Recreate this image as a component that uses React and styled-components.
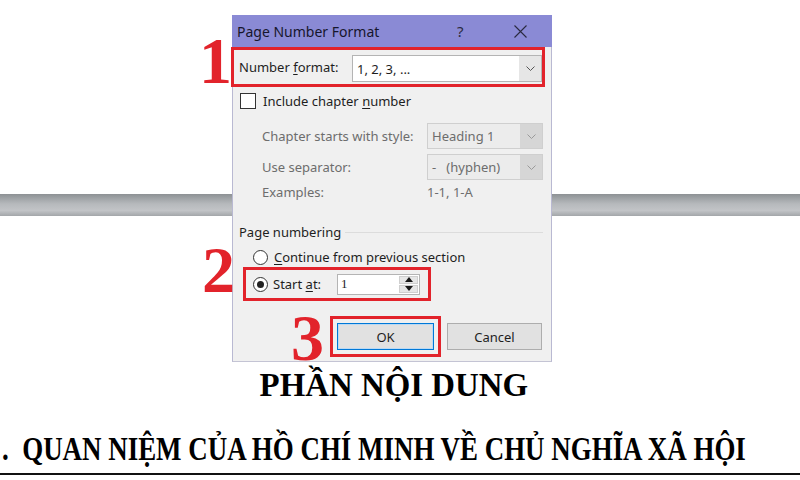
import React from "react";
import styled, { createGlobalStyle } from "styled-components";

const Global = createGlobalStyle`
  html, body { margin: 0; padding: 0; background: #fff; }
  * { box-sizing: border-box; }
`;

const Page = styled.div`
  position: relative;
  width: 800px;
  height: 480px;
  overflow: hidden;
  background: #fff;
  font-family: "Liberation Serif", "Times New Roman", serif;
`;

const Bar = styled.div`
  margin-top: 194px;
  height: 22px;
  background: linear-gradient(
    to bottom,
    #8d9194 0%,
    #9ea2a5 18%,
    #b6b9bc 45%,
    #c2c4c7 75%,
    #a3a6a9 100%
  );
`;

const Heading = styled.div`
  margin-top: 152px;
  padding-right: 13px;
  height: 34px;
  font-size: 34px;
  line-height: 34px;
  font-weight: bold;
  text-align: center;
  color: #000;
  white-space: nowrap;
`;

const Squeeze = styled.span`
  display: inline-block;
  white-space: pre;
  transform: scaleX(${(p) => p.$sx});
  transform-origin: ${(p) => p.$origin || "center"};
`;

const SubHeading = styled.div`
  margin-top: 31px;
  padding-left: 2px;
  height: 33px;
  font-size: 33px;
  line-height: 33px;
  font-weight: bold;
  color: #000;
  white-space: nowrap;
`;

const Rule = styled.div`
  margin-top: 7px;
  height: 2px;
  background: #111;
`;

const Dialog = styled.div`
  position: absolute;
  left: 232px;
  top: 15px;
  width: 320px;
  height: 347px;
  background: #f0f0f0;
  border-left: 1px solid #b9b9d2;
  border-right: 1px solid #b9b9d2;
  border-bottom: 1px solid #c4c4d4;
  font-family: "Noto Sans", "Open Sans", sans-serif;
  font-size: 13px;
  color: #1e1e1e;
`;

const TitleBar = styled.div`
  display: flex;
  align-items: center;
  height: 32px;
  margin: 0 -1px;
  padding-left: 5px;
  padding-right: 10px;
  background: #8a8ad5;
  color: #16162c;
`;

const TitleText = styled.span`
  font-size: 14px;
`;

const CaptionBtn = styled.span`
  display: flex;
  align-items: center;
  justify-content: center;
  width: 40px;
  height: 32px;
  margin-left: ${(p) => p.$ml || 0}px;
  font-size: 15px;
  color: #2a2a40;
`;

const RedBox = styled.div`
  display: flex;
  align-items: center;
  border: 3px solid #e2232b;
  height: ${(p) => p.$h}px;
  width: ${(p) => p.$w}px;
  margin-left: ${(p) => p.$ml || 0}px;
  margin-top: ${(p) => p.$mt || 0}px;
  padding: ${(p) => p.$pad || "0"};
`;

const Label = styled.span`
  color: ${(p) => (p.$disabled ? "#6d6d6d" : "#1e1e1e")};
  white-space: nowrap;
  line-height: 16px;
  margin-left: ${(p) => p.$ml || 0}px;
`;

const U = styled.span`
  text-decoration: underline;
  text-underline-offset: 2px;
`;

const Select = styled.div`
  display: flex;
  align-items: stretch;
  width: ${(p) => p.$w}px;
  height: ${(p) => p.$h}px;
  margin-left: ${(p) => (p.$auto ? "auto" : "0")};
  margin-top: ${(p) => p.$mt || 0}px;
  background: ${(p) => (p.$disabled ? "#ececec" : "#fff")};
  border: 1px solid ${(p) => (p.$disabled ? "#cfcfcf" : "#b4b4b4")};
`;

const SelectValue = styled.span`
  flex: 1;
  display: flex;
  align-items: center;
  padding-left: 4px;
  color: ${(p) => (p.$disabled ? "#6d6d6d" : "#1e1e1e")};
  white-space: pre;
`;

const SelectArrow = styled.span`
  width: 22px;
  display: flex;
  align-items: center;
  justify-content: center;
  background: ${(p) => (p.$disabled ? "#d6d6d6" : "#e6e6e6")};
`;

const CheckRow = styled.div`
  display: flex;
  align-items: center;
  gap: 7px;
  height: 16px;
  margin-top: 6px;
  padding-left: 7px;
`;

const Checkbox = styled.span`
  width: 16px;
  height: 16px;
  border: 1px solid #333;
  background: #fff;
`;

const ChapterGrid = styled.div`
  display: grid;
  grid-template-columns: 165px 116px;
  grid-template-rows: 26px 26px 14px;
  row-gap: 5px;
  align-items: center;
  margin-top: 14px;
  padding-left: 29px;
`;

const GroupHeader = styled.div`
  display: flex;
  align-items: center;
  height: 16px;
  margin-top: 25px;
  padding-left: 6px;
  padding-right: 8px;
`;

const GroupLine = styled.span`
  flex: 1;
  height: 1px;
  margin-left: 4px;
  background: #dcdcdc;
`;

const RadioRow = styled.div`
  display: flex;
  align-items: center;
  gap: 6px;
  height: 16px;
  margin-top: 9px;
  padding-left: 20px;
`;

const Radio = styled.span`
  flex: none;
  width: 15px;
  height: 15px;
  border-radius: 50%;
  border: 1px solid #333;
  background: #fff;
  display: flex;
  align-items: center;
  justify-content: center;
  &::after {
    content: "";
    display: ${(p) => (p.$checked ? "block" : "none")};
    width: 7px;
    height: 7px;
    border-radius: 50%;
    background: #222;
  }
`;

const SpinBox = styled.div`
  display: flex;
  width: 83px;
  height: 21px;
  margin-left: auto;
  background: #fff;
  border: 1px solid #b4b4b4;
`;

const SpinValue = styled.span`
  flex: 1;
  display: flex;
  align-items: center;
  padding-left: 3px;
  font-family: "Liberation Serif", serif;
  font-size: 13px;
`;

const SpinButtons = styled.span`
  width: 21px;
  display: flex;
  flex-direction: column;
  gap: 1px;
  padding: 1px;
  background: #fff;
`;

const SpinBtn = styled.span`
  flex: 1;
  display: flex;
  align-items: center;
  justify-content: center;
  background: #e6e6e6;
  border: 1px solid #cfcfcf;
`;

const ButtonRow = styled.div`
  display: flex;
  align-items: center;
  margin-top: 15px;
  padding-left: 97px;
`;

const Button = styled.span`
  display: flex;
  align-items: center;
  justify-content: center;
  width: ${(p) => p.$w}px;
  height: 27px;
  margin-left: ${(p) => p.$ml || 0}px;
  background: #e1e1e1;
  border: 1px solid ${(p) => (p.$primary ? "#0078d7" : "#adadad")};
  box-shadow: ${(p) => (p.$primary ? "inset 0 0 0 1px #bcd9f2" : "none")};
  color: #1e1e1e;
`;

const Annotation = styled.span`
  position: absolute;
  top: ${(p) => p.$top}px;
  left: ${(p) => p.$left}px;
  font-family: "Liberation Serif", "Times New Roman", serif;
  font-weight: bold;
  font-size: 66px;
  line-height: 48px;
  color: #e2232b;
`;

const Chevron = ({ color = "#555" }) => (
  <svg width="9" height="5" viewBox="0 0 9 5">
    <path d="M0.5 0.5 L4.5 4.5 L8.5 0.5" fill="none" stroke={color} strokeWidth="1" />
  </svg>
);

const CloseIcon = () => (
  <svg width="13" height="13" viewBox="0 0 13 13">
    <path d="M0.5 0.5 L12.5 12.5 M12.5 0.5 L0.5 12.5" stroke="#2a2a40" strokeWidth="1.1" />
  </svg>
);

const Tri = ({ up }) => (
  <svg width="8" height="5" viewBox="0 0 8 5">
    <path d={up ? "M0 5 L4 0 L8 5 Z" : "M0 0 L8 0 L4 5 Z"} fill="#1a1a1a" />
  </svg>
);

export default function App() {
  return (
    <>
      <Global />
      <Page>
        <Bar />
        <Heading>
          <Squeeze $sx={0.967}>PHẦN NỘI DUNG</Squeeze>
        </Heading>
        <SubHeading>
          <Squeeze $sx={0.816} $origin="left">{".  QUAN NIỆM CỦA HỒ CHÍ MINH VỀ CHỦ NGHĨA XÃ HỘI"}</Squeeze>
        </SubHeading>
        <Rule />

        <Dialog>
          <TitleBar>
            <TitleText>Page Number Format</TitleText>
            <CaptionBtn $ml={61}>?</CaptionBtn>
            <CaptionBtn $ml={20}>
              <CloseIcon />
            </CaptionBtn>
          </TitleBar>

          <RedBox $w={314} $h={40} $ml={-2} $pad="0 0 0 5px">
            <Label>
              Number <U>f</U>ormat:
            </Label>
            <Select $w={190} $h={27} $auto $mt={3}>
              <SelectValue>1, 2, 3, ...</SelectValue>
              <SelectArrow>
                <Chevron />
              </SelectArrow>
            </Select>
          </RedBox>

          <CheckRow>
            <Checkbox />
            <Label>
              Include chapter <U>n</U>umber
            </Label>
          </CheckRow>

          <ChapterGrid>
            <Label $disabled>Chapter starts with style:</Label>
            <Select $w={116} $h={26} $disabled>
              <SelectValue $disabled>Heading 1</SelectValue>
              <SelectArrow $disabled>
                <Chevron color="#9a9a9a" />
              </SelectArrow>
            </Select>
            <Label $disabled>Use separator:</Label>
            <Select $w={116} $h={26} $disabled>
              <SelectValue $disabled>{"-   (hyphen)"}</SelectValue>
              <SelectArrow $disabled>
                <Chevron color="#9a9a9a" />
              </SelectArrow>
            </Select>
            <Label $disabled>Examples:</Label>
            <Label $disabled>1-1, 1-A</Label>
          </ChapterGrid>

          <GroupHeader>
            <Label>Page numbering</Label>
            <GroupLine />
          </GroupHeader>

          <RadioRow>
            <Radio />
            <Label>
              <U>C</U>ontinue from previous section
            </Label>
          </RadioRow>

          <RedBox $w={188} $h={34} $ml={10} $mt={2} $pad="0 8px 0 7px">
            <Radio $checked />
            <Label $ml={5}>
              Start <U>a</U>t:
            </Label>
            <SpinBox>
              <SpinValue>1</SpinValue>
              <SpinButtons>
                <SpinBtn>
                  <Tri up />
                </SpinBtn>
                <SpinBtn>
                  <Tri />
                </SpinBtn>
              </SpinButtons>
            </SpinBox>
          </RedBox>

          <ButtonRow>
            <RedBox $w={111} $h={41} $pad="0 4px">
              <Button $w={97} $primary>
                OK
              </Button>
            </RedBox>
            <Button $w={95} $ml={6}>
              Cancel
            </Button>
          </ButtonRow>

          <Annotation $top={22} $left={-34}>1</Annotation>
          <Annotation $top={231} $left={-31}>2</Annotation>
          <Annotation $top={299} $left={58}>3</Annotation>
        </Dialog>
      </Page>
    </>
  );
}
